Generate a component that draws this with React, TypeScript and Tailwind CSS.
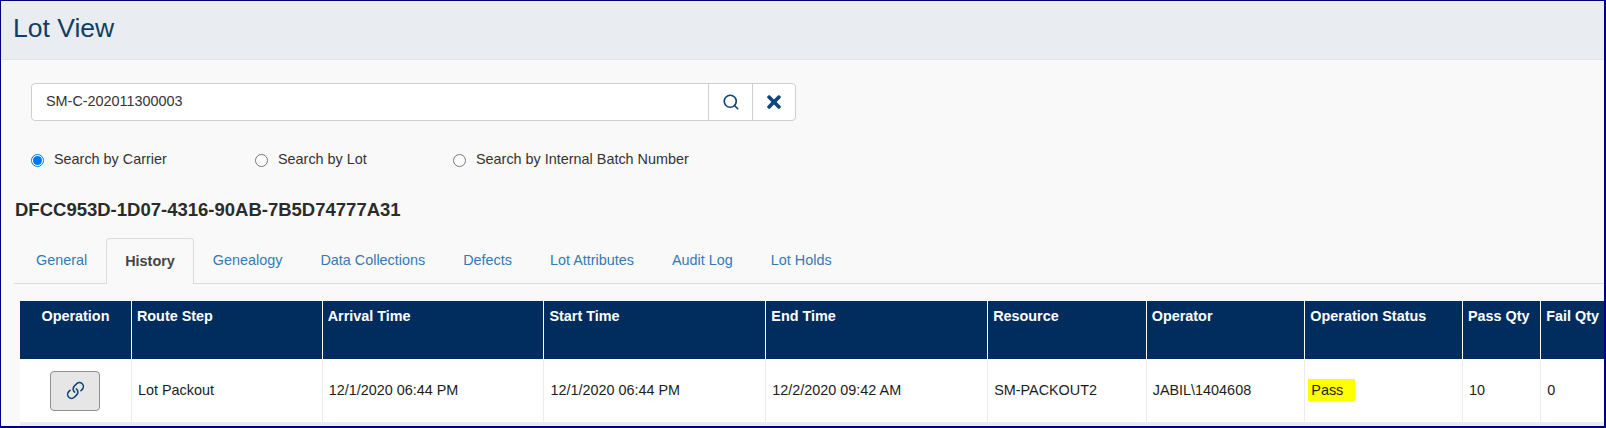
import { Link, Search } from "lucide-react";
import { FaTimes } from "react-icons/fa";

const tabs = ["General", "History", "Genealogy", "Data Collections", "Defects", "Lot Attributes", "Audit Log", "Lot Holds"];

const columns = [
  { label: "Operation", width: "w-[111px]", center: true },
  { label: "Route Step", width: "w-[190px]" },
  { label: "Arrival Time", width: "w-[221px]" },
  { label: "Start Time", width: "w-[221px]" },
  { label: "End Time", width: "w-[221px]" },
  { label: "Resource", width: "w-[158px]" },
  { label: "Operator", width: "w-[158px]" },
  { label: "Operation Status", width: "w-[157px]" },
  { label: "Pass Qty", width: "w-[78px]" },
  { label: "Fail Qty", width: "w-[63px]" },
];

const row = ["Lot Packout", "12/1/2020 06:44 PM", "12/1/2020 06:44 PM", "12/2/2020 09:42 AM", "SM-PACKOUT2", "JABIL\\1404608"];

function Radio({ label, checked, className }: { label: string; checked?: boolean; className: string }) {
  return (
    <label className={`flex items-center gap-[10px] ${className}`}>
      <span
        className={`flex h-[13px] w-[13px] items-center justify-center rounded-full border bg-white ${
          checked ? "border-[#0075ff]" : "border-[#767676]"
        }`}
      >
        {checked && <span className="h-[9px] w-[9px] rounded-full bg-[#0075ff]" />}
      </span>
      {label}
    </label>
  );
}

export default function App() {
  return (
    <div className="flex h-[428px] w-[1606px] flex-col overflow-hidden border-t border-r-2 border-b-2 border-l border-[#00007f] bg-[#f9f9f9] font-['Liberation_Sans',Arial,sans-serif] text-[14.4px] text-[#1f1f1f]">
      {/* Page title */}
      <header className="flex h-[59px] shrink-0 items-center border-b border-[#dfe3ea] bg-[#e9ecf1] pl-3">
        <h1 className="pb-[2px] text-[26.5px] font-normal text-[#123d66]">Lot View</h1>
      </header>

      {/* Search */}
      <div className="ml-[30px] mt-[23px] flex h-[38px] w-[765px] shrink-0 overflow-hidden rounded border border-[#cfcfcf] bg-white">
        <div className="flex flex-1 items-center pl-[14px] text-[#333]">SM-C-202011300003</div>
        <button className="flex w-[44px] items-center justify-center border-l border-[#cfcfcf]">
          <Search size={18} strokeWidth={2.2} className="text-[#0f4577]" />
        </button>
        <button className="flex w-[43px] items-center justify-center border-l border-[#cfcfcf]">
          <FaTimes size={20} className="text-[#0f4577]" />
        </button>
      </div>

      <div className="ml-[30px] mt-[29px] flex h-[20px] shrink-0 items-center text-[#333]">
        <Radio label="Search by Carrier" checked className="w-[224px]" />
        <Radio label="Search by Lot" className="w-[198px]" />
        <Radio label="Search by Internal Batch Number" className="" />
      </div>

      <h2 className="ml-[14px] mt-[29px] text-[18.5px] font-bold leading-[22px] text-[#2b2b2b]">
        DFCC953D-1D07-4316-90AB-7B5D74777A31
      </h2>

      {/* Tabs */}
      <nav className="ml-[13px] mt-[17px] flex h-[46px] shrink-0 items-end border-b border-[#dddddd] pl-[3px]">
        {tabs.map((tab) =>
          tab === "History" ? (
            <span
              key={tab}
              className="-mb-px flex h-[46px] items-center rounded-t border border-b-0 border-[#dddddd] bg-[#f9f9f9] px-[18px] font-bold text-[#444]"
            >
              {tab}
            </span>
          ) : (
            <span key={tab} className="flex h-[45px] items-center px-[19px] text-[#337ab7]">
              {tab}
            </span>
          ),
        )}
      </nav>

      {/* History table */}
      <div className="ml-[19px] mt-[17px] flex-1 overflow-hidden bg-[#e9ecf1]">
        <table className="w-[1584px] table-fixed border-collapse">
          <thead>
            <tr className="h-[58px] bg-[#012d5e] align-top text-white">
              {columns.map((col, i) => (
                <th
                  key={col.label}
                  className={`${col.width} px-[5px] pt-[6px] leading-[18px] font-bold ${col.center ? "text-center" : "text-left"} ${
                    i > 0 ? "border-l border-white" : ""
                  }`}
                >
                  {col.label}
                </th>
              ))}
            </tr>
          </thead>
          <tbody>
            <tr className="h-[63px] bg-white text-[#1c1c1c]">
              <td className="text-center">
                <button className="inline-flex h-[40px] w-[50px] items-center justify-center rounded border border-[#8f8f8f] bg-[#e6e6e6] align-middle">
                  <Link size={19} strokeWidth={2} className="-scale-x-100 rotate-90 text-[#0f4577]" />
                </button>
              </td>
              {row.map((cell) => (
                <td key={cell} className="border-l border-[#ececec] px-[6px]">
                  {cell}
                </td>
              ))}
              <td className="border-l border-[#ececec] px-[3px]">
                <span className="inline-block bg-[#ffff00] pr-3 pl-[3px] leading-[22px]">Pass</span>
              </td>
              <td className="border-l border-[#ececec] px-[6px]">10</td>
              <td className="border-l border-[#ececec] px-[6px]">0</td>
            </tr>
          </tbody>
        </table>
      </div>
    </div>
  );
}
